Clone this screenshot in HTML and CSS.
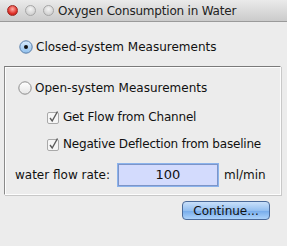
FILE: index.html
```html
<html lang="en">
<head>
    <meta charset="UTF-8">
    <meta name="viewport" content="width=device-width, initial-scale=1.0">
    <title>Oxygen Consumption in Water</title>
    <link rel="stylesheet" href="styles.css">
</head>
<body>
    <div class="window">
        <div class="titlebar">
            <div class="lights">
                <span class="light red"></span>
                <span class="light"></span>
                <span class="light"></span>
            </div>
            <div class="title">Oxygen Consumption in Water</div>
        </div>

        <div class="content">
            <label class="radio-row closed">
                <svg class="radio" width="14" height="14" viewBox="0 0 14 14">
                    <defs>
                        <linearGradient id="selFill" x1="0" y1="0" x2="0" y2="1">
                            <stop offset="0" stop-color="#d9ebfb"/>
                            <stop offset="1" stop-color="#8fbfec"/>
                        </linearGradient>
                    </defs>
                    <circle cx="7" cy="7" r="6.2" fill="url(#selFill)" stroke="#5a7ea8" stroke-width="1"/>
                    <circle cx="7" cy="7" r="2" fill="#111"/>
                </svg>
                <span>Closed-system Measurements</span>
            </label>

            <div class="group">
                <label class="radio-row">
                    <svg class="radio" width="14" height="14" viewBox="0 0 14 14">
                        <defs>
                            <linearGradient id="offFill" x1="0" y1="0" x2="0" y2="1">
                                <stop offset="0" stop-color="#ffffff"/>
                                <stop offset="1" stop-color="#e6e6e6"/>
                            </linearGradient>
                        </defs>
                        <circle cx="7" cy="7" r="6.2" fill="url(#offFill)" stroke="#8d8d8d" stroke-width="1"/>
                    </svg>
                    <span>Open-system Measurements</span>
                </label>

                <label class="check-row first">
                    <svg class="check" width="14" height="14" viewBox="0 0 14 14">
                        <rect x="1.5" y="2.5" width="11" height="11" rx="1.5" fill="#f6f6f6" stroke="#a9a9a9"/>
                        <path d="M4 8 L6.2 11 L11.5 1.5" fill="none" stroke="#5c5c5c" stroke-width="1.4"/>
                    </svg>
                    <span>Get Flow from Channel</span>
                </label>

                <label class="check-row">
                    <svg class="check" width="14" height="14" viewBox="0 0 14 14">
                        <rect x="1.5" y="2.5" width="11" height="11" rx="1.5" fill="#f6f6f6" stroke="#a9a9a9"/>
                        <path d="M4 8 L6.2 11 L11.5 1.5" fill="none" stroke="#5c5c5c" stroke-width="1.4"/>
                    </svg>
                    <span>Negative Deflection from baseline</span>
                </label>

                <div class="flow-row">
                    <span class="flow-label">water flow rate:</span>
                    <div class="field">100</div>
                    <span class="unit">ml/min</span>
                </div>
            </div>

            <div class="actions">
                <button type="button" class="btn">Continue...</button>
            </div>
        </div>
    </div>
</body>
</html>
```

FILE: styles.css
```css
body {
    margin: 0;
    background-color: #ececec;
    font-family: "DejaVu Sans", "Liberation Sans", sans-serif;
    font-size: 12px;
    color: #111;
}

.window {
    width: 287px;
    height: 246px;
    background-color: #ececec;
    overflow: hidden;
}

/* title bar */
.titlebar {
    height: 21px;
    display: flex;
    align-items: center;
    background: linear-gradient(#eaeaea, #cbcbcb);
    border-bottom: 1px solid #9a9a9a;
}

.lights {
    display: flex;
    gap: 7px;
    padding-left: 7px;
    width: 51px;
}

.light {
    width: 11px;
    height: 11px;
    border-radius: 50%;
    background: radial-gradient(circle at 50% 35%, #f4f4f4, #c4c4c4);
    border: 1px solid #a6a6a6;
    box-sizing: border-box;
}

.light.red {
    background: radial-gradient(circle at 50% 35%, #ffb0a8, #e0312a 60%, #a51812);
    border-color: #9c2a24;
}

.title {
    font-size: 12px;
    letter-spacing: -0.2px;
    color: #222;
}

/* content */
.content {
    padding-top: 17px;
}

.radio-row,
.check-row {
    display: flex;
    align-items: center;
    height: 16px;
}

.radio-row .radio {
    margin-right: 3px;
}

.closed {
    padding-left: 19px;
}

.group {
    margin: 11px 6px 0 4px;
    padding: 13px 0 8px 0;
    border: 1px solid;
    border-color: #7a7a7a #fdfdfd #fdfdfd #8a8a8a;
    box-shadow: inset 1px 1px 0 #fdfdfd, 1px 1px 0 #c8c8c8;
}

.group .radio-row {
    padding-left: 13px;
}

.check-row {
    padding-left: 41px;
    margin-top: 11px;
    letter-spacing: -0.2px;
}

.check-row.first {
    margin-top: 13px;
}

.check-row .check {
    margin-right: 3px;
}

.flow-row {
    display: flex;
    align-items: center;
    margin-top: 12px;
    padding-left: 10px;
}

.flow-label {
    width: 103px;
}

.field {
    width: 98px;
    height: 20px;
    line-height: 20px;
    text-align: center;
    background-color: #d3dbfd;
    border: 1px solid #7d95c8;
    box-shadow: 0 0 0 1px #8bb3ec;
    font-size: 13px;
}

.unit {
    margin-left: 6px;
}

.actions {
    display: flex;
    justify-content: flex-end;
    padding: 6px 17px 0 0;
}

.btn {
    width: 88px;
    height: 19px;
    padding: 0;
    font-family: inherit;
    font-size: 12px;
    color: #111;
    border: 1px solid #4b6a99;
    border-radius: 4px;
    background: linear-gradient(#c9e0fa, #94bff0 50%, #74aaea 51%, #acd2fa);
    cursor: pointer;
}
```
